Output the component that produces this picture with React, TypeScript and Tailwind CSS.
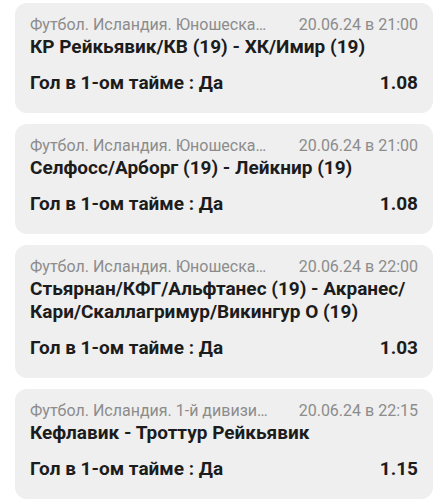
import React from 'react'

type Bet = {
  league: string
  date: string
  match: string
  market: string
  odds: string
}

const BETS: Bet[] = [
  {
    league: 'Футбол. Исландия. Юношеска…',
    date: '20.06.24 в 21:00',
    match: 'КР Рейкьявик/КВ (19) - ХК/Имир (19)',
    market: 'Гол в 1-ом тайме : Да',
    odds: '1.08',
  },
  {
    league: 'Футбол. Исландия. Юношеска…',
    date: '20.06.24 в 21:00',
    match: 'Селфосс/Арборг (19) - Лейкнир (19)',
    market: 'Гол в 1-ом тайме : Да',
    odds: '1.08',
  },
  {
    league: 'Футбол. Исландия. Юношеска…',
    date: '20.06.24 в 22:00',
    match: 'Стьярнан/КФГ/Альфтанес (19) - Акранес/Кари/Скаллагримур/Викингур О (19)',
    market: 'Гол в 1-ом тайме : Да',
    odds: '1.03',
  },
  {
    league: 'Футбол. Исландия. 1-й дивизи…',
    date: '20.06.24 в 22:15',
    match: 'Кефлавик - Троттур Рейкьявик',
    market: 'Гол в 1-ом тайме : Да',
    odds: '1.15',
  },
]

function BetCard({ bet }: { bet: Bet }) {
  return (
    <div className="bg-[#efefef] rounded-[12px] px-[15px] pt-[11px] pb-[19px]">
      <div className="flex items-center justify-between text-[16px] leading-[21px] text-[#8c8c8c] whitespace-nowrap">
        <span className="truncate">{bet.league}</span>
        <span className="ml-4 shrink-0">{bet.date}</span>
      </div>
      <div className="text-[19px] leading-[23px] font-bold text-[#1c1c1c]">
        {bet.match}
      </div>
      <div className="mt-[13px] flex items-center justify-between text-[19px] leading-[23px] font-bold text-[#1c1c1c]">
        <span>{bet.market}</span>
        <span>{bet.odds}</span>
      </div>
    </div>
  )
}

export default function App() {
  return (
    <div
      className="w-[448px] h-[500px] bg-white overflow-hidden px-[15px] pt-[3px] flex flex-col gap-[11px]"
      style={{ fontFamily: 'Roboto, "Noto Sans", sans-serif' }}
    >
      {BETS.map((b, i) => (
        <BetCard key={i} bet={b} />
      ))}
    </div>
  )
}
